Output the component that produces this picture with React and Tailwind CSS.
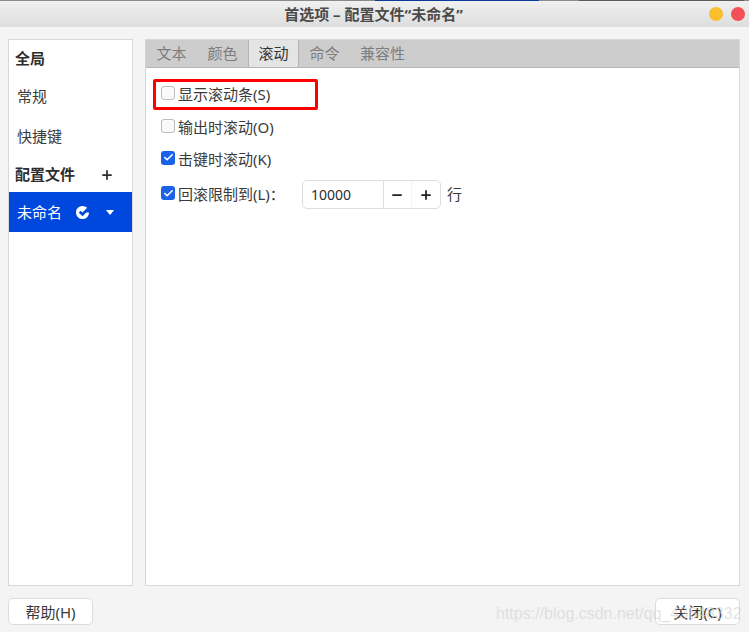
import React from "react";
import { Check, Minus, Plus } from "lucide-react";

const cjk = "font-['Noto_Sans','Noto_Sans_CJK_SC',sans-serif]";

function Box({ checked }) {
  if (checked) {
    return (
      <span className="-mt-[3px] flex h-[14px] w-[14px] shrink-0 items-center justify-center rounded-[3px] bg-[#1a62e8]">
        <Check size={11} strokeWidth={3.5} className="text-white" />
      </span>
    );
  }
  return <span className="-mt-[3px] h-[14px] w-[14px] shrink-0 rounded-[3px] border border-[#bdbdbd] bg-[#fafafa]" />;
}

function Option({ checked, label, className }) {
  return (
    <div className={"flex h-[26px] items-center gap-[3px] " + (className || "")}>
      <Box checked={checked} />
      <span className="text-[15px] text-[#3a3a3a]">{label}</span>
    </div>
  );
}

function Tab({ label, active }) {
  return (
    <div
      className={
        "flex h-full w-[51px] items-center justify-center text-[15px] " +
        (active
          ? "border-x border-[#b4b4b4] bg-[#e4e4e4] text-[#333333]"
          : "text-[#7d7d7d]")
      }
    >
      {label}
    </div>
  );
}

export default function App() {
  return (
    <div className={"relative flex h-[632px] w-[749px] flex-col overflow-hidden bg-[#f4f4f4] " + cjk}>
      <div className="flex h-[1px] bg-[#8a8a8a]">
        <div className="ml-[375px] h-full w-[164px] bg-[#0a3a9c]" />
        <div className="ml-[40px] h-full w-[165px] bg-[#5e5a55]" />
      </div>
      <header className="relative flex h-[26px] items-center justify-center bg-gradient-to-b from-[#f0f0f0] to-[#dedede] pr-[2px]">
        <span className="text-[15px] font-bold text-[#4a4a4a]">首选项 – 配置文件“未命名”</span>
        <span className="absolute left-[709px] top-[6px] h-[14px] w-[14px] rounded-full bg-[#fbbf2e]" />
        <span className="absolute left-[731px] top-[6px] h-[14px] w-[14px] rounded-full bg-[#f4505a]" />
      </header>

      <div className="flex gap-[12px] pl-[8px] pr-[9px] pt-[12px]">
        <aside className="flex h-[547px] w-[125px] flex-col border border-[#d8d8d8] bg-white">
          <div className="flex h-[36px] items-center pl-[6px] text-[15px] font-bold text-[#2e2e2e]">全局</div>
          <div className="flex h-[40px] items-center pl-[8px] text-[15px] text-[#3a3a3a]">常规</div>
          <div className="flex h-[41px] items-center pl-[8px] text-[15px] text-[#3a3a3a]">快捷键</div>
          <div className="flex h-[35px] items-center justify-between pl-[6px] pr-[18px] text-[15px] font-bold text-[#2e2e2e]">
            配置文件
            <Plus size={14} strokeWidth={3} className="text-[#2e2e2e]" />
          </div>
          <div className="flex h-[40px] items-center bg-[#0047de] pl-[8px] text-[15px] text-white">
            <span>未命名</span>
            <svg viewBox="0 0 16 16" className="ml-[13px] h-[15px] w-[15px]">
              <path d="M8 1a7 7 0 1 0 7 7h-3l-4 4-4-4 2-2 2 2 5-5A7 7 0 0 0 8 1z" fill="#ffffff" />
            </svg>
            <svg viewBox="0 0 10 6" className="ml-[15px] h-[5px] w-[10px]">
              <path d="M0 0h10L5 6z" fill="#ffffff" />
            </svg>
          </div>
        </aside>

        <main className="flex h-[547px] flex-1 flex-col border border-[#d8d8d8] bg-white">
          <div className="flex h-[28px] shrink-0 items-stretch border-b border-[#b4b4b4] bg-[#cdcdcd]">
            <Tab label="文本" />
            <Tab label="颜色" />
            <Tab label="滚动" active />
            <Tab label="命令" />
            <div className="flex h-full items-center pl-[10px] text-[15px] text-[#7d7d7d]">兼容性</div>
          </div>
          <div className="flex flex-col gap-[7px] pl-[15px] pt-[13px]">
            <Option label="显示滚动条(S)" />
            <Option label="输出时滚动(O)" />
            <Option checked label="击键时滚动(K)" className="-mt-[1px]" />
            <div className="mt-[1px] flex items-center">
              <Option checked label="回滚限制到(L)：" />
              <div className="ml-[17px] flex h-[29px] w-[139px] items-center rounded-[5px] border border-[#dddddd]">
                <span className="flex h-full w-[81px] items-center border-r border-[#dddddd] pl-[8px] text-[14px] text-[#2e2e2e]">10000</span>
                <span className="flex h-full w-[28px] items-center justify-center border-r border-[#f3f3f3]">
                  <Minus size={14} strokeWidth={3} className="text-[#222222]" />
                </span>
                <span className="flex h-full w-[28px] items-center justify-center">
                  <Plus size={14} strokeWidth={3} className="text-[#222222]" />
                </span>
              </div>
              <span className="ml-[6px] text-[15px] text-[#3a3a3a]">行</span>
            </div>
          </div>
        </main>
      </div>

      <div className="flex items-start justify-between pl-[8px] pr-[9px] pt-[12px]">
        <button className="flex h-[27px] w-[85px] items-center justify-center rounded-[5px] border border-[#dcdcdc] bg-white pt-[1px] text-[15px] text-[#3a3a3a]">帮助(H)</button>
        <button className="flex h-[27px] w-[85px] items-center justify-center rounded-[5px] border border-[#dcdcdc] bg-white pt-[1px] text-[15px] text-[#3a3a3a]">关闭(C)</button>
      </div>

      {/* red annotation drawn over the screenshot */}
      <div className="absolute left-[153px] top-[79px] h-[31px] w-[165px] rounded-[2px] border-[3px] border-[#ff0000]" />
      {/* csdn watermark */}
      <div className="absolute left-[496px] top-[602px] font-['Liberation_Sans',sans-serif] text-[16px] text-[#d0d0d0]/60">https://blog.csdn.net/qq_43648332</div>
    </div>
  );
}
